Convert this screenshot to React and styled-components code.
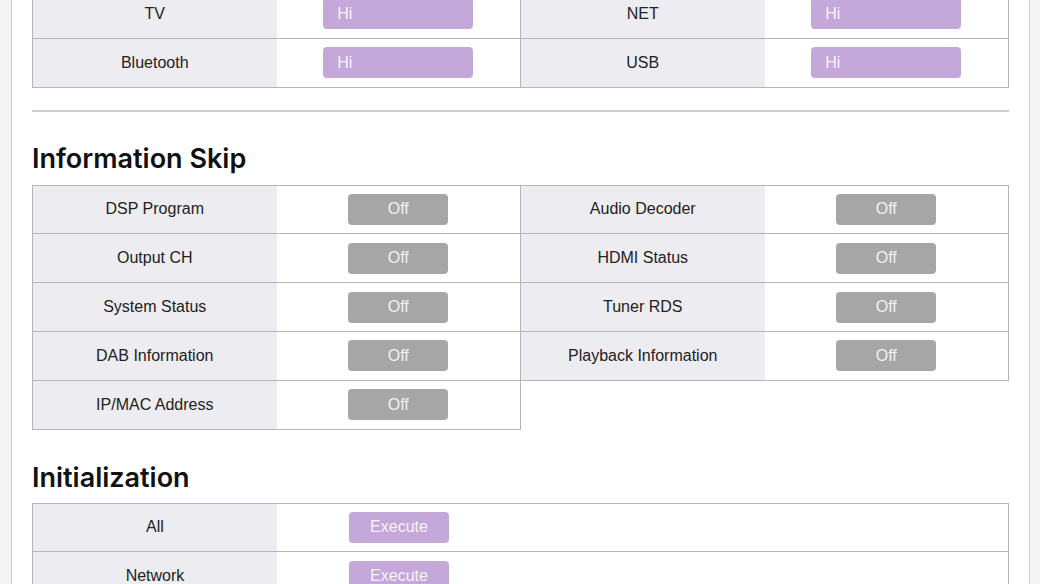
import React from "react";
import styled, { createGlobalStyle } from "styled-components";

const Global = createGlobalStyle`
  html, body { margin: 0; padding: 0; }
  body {
    background: #f5f2f6;
    font-family: "Liberation Sans", Arial, sans-serif;
    color: #222;
    overflow: hidden;
  }
`;

const Page = styled.div`
  margin: 0 10px 0 11px;
  background: #fff;
  border-left: 1px solid #cfcbd2;
  border-right: 1px solid #cfcbd2;
  padding: 0 20px;
  min-height: 600px;
`;

const Content = styled.div`
  margin-top: -11px;
  display: flex;
  flex-direction: column;
`;

const Table = styled.table`
  width: 100%;
  border-collapse: collapse;
  table-layout: fixed;
`;

const Label = styled.td`
  width: 25%;
  height: 47.8px;
  padding: 0;
  border: 1px solid #b5b5b7;
  border-right: none;
  background: #edecf1;
  text-align: center;
  vertical-align: middle;
  font-size: 16px;
  color: #222;
`;

const Value = styled.td`
  width: ${(p) => (p.$span ? "auto" : "25%")};
  height: 47.8px;
  padding: ${(p) => (p.$span ? "0 0 0 72px" : "0")};
  border: 1px solid #b5b5b7;
  border-left: none;
  background: #fff;
  text-align: ${(p) => (p.$span ? "left" : "center")};
  vertical-align: middle;
`;

const Empty = styled.td`
  border: none;
  padding: 0;
`;

const Button = styled.button`
  display: inline-block;
  box-sizing: border-box;
  width: ${(p) => (p.$wide ? "150px" : "100px")};
  height: 31px;
  border: none;
  border-radius: 4px;
  background: ${(p) => (p.$tone === "gray" ? "#a6a6a6" : "#c4a8d9")};
  color: ${(p) => (p.$tone === "gray" ? "#f2f2f2" : "#f8f2fc")};
  font-family: "Liberation Sans", Arial, sans-serif;
  font-size: 16px;
  text-align: ${(p) => (p.$wide ? "left" : "center")};
  padding: ${(p) => (p.$wide ? "0 0 0 14px" : "0")};
  cursor: pointer;
`;

const Rule = styled.hr`
  margin: 22px 0 0;
  border: none;
  height: 2px;
  background: #d0d0d2;
`;

const Heading = styled.h2`
  margin: ${(p) => p.$top}px 0 ${(p) => p.$bottom}px;
  font-family: Inter, "Noto Sans", sans-serif;
  font-weight: 600;
  font-size: 27px;
  line-height: 30px;
  color: #111;
`;

const inputRows = [
  ["TV", "NET"],
  ["Bluetooth", "USB"],
];

const skip = [
  ["DSP Program", "Audio Decoder"],
  ["Output CH", "HDMI Status"],
  ["System Status", "Tuner RDS"],
  ["DAB Information", "Playback Information"],
  ["IP/MAC Address", null],
];

const init = ["All", "Network"];

export default function App() {
  return (
    <>
      <Global />
      <Page>
        <Content>
          <Table>
            <tbody>
              {inputRows.map(([a, b]) => (
                <tr key={a}>
                  <Label>{a}</Label>
                  <Value>
                    <Button $wide>Hi</Button>
                  </Value>
                  <Label>{b}</Label>
                  <Value>
                    <Button $wide>Hi</Button>
                  </Value>
                </tr>
              ))}
            </tbody>
          </Table>
          <Rule />
          <Heading $top={32} $bottom={11}>Information Skip</Heading>
          <Table>
            <tbody>
              {skip.map(([a, b]) => (
                <tr key={a}>
                  <Label>{a}</Label>
                  <Value>
                    <Button $tone="gray">Off</Button>
                  </Value>
                  {b ? (
                    <>
                      <Label>{b}</Label>
                      <Value>
                        <Button $tone="gray">Off</Button>
                      </Value>
                    </>
                  ) : (
                    <>
                      <Empty />
                      <Empty />
                    </>
                  )}
                </tr>
              ))}
            </tbody>
          </Table>
          <Heading $top={33} $bottom={10}>Initialization</Heading>
          <Table>
            <tbody>
              {init.map((a) => (
                <tr key={a}>
                  <Label>{a}</Label>
                  <Value $span>
                    <Button>Execute</Button>
                  </Value>
                </tr>
              ))}
            </tbody>
          </Table>
        </Content>
      </Page>
    </>
  );
}
